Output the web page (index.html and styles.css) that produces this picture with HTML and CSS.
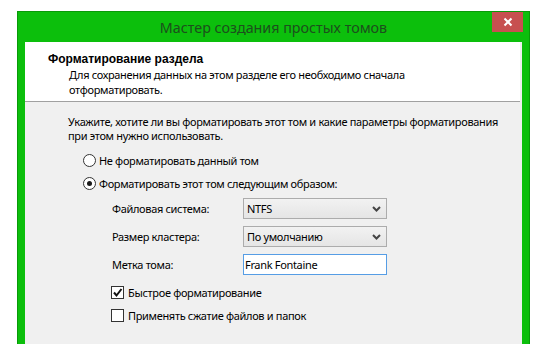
FILE: index.html
```html
<!DOCTYPE html>
<html lang="ru">
<head>
<meta charset="utf-8">
<title>Мастер создания простых томов</title>
<link rel="stylesheet" href="styles.css">
</head>
<body>
<div class="window">
  <div class="titlebar">
    <span class="title">Мастер создания простых томов</span>
    <div class="close">
      <svg width="10" height="10" viewBox="0 0 10 10"><path d="M1.5 1.5 L8.5 8.5 M8.5 1.5 L1.5 8.5" stroke="#fff" stroke-width="2" fill="none"/></svg>
    </div>
  </div>
  <div class="client">
    <div class="header">
      <div class="h-title">Форматирование раздела</div>
      <div class="h-sub">Для сохранения данных на этом разделе его необходимо сначала<br>отформатировать.</div>
    </div>
    <div class="content">
      <p class="intro">Укажите, хотите ли вы форматировать этот том и какие параметры форматирования<br>при этом нужно использовать.</p>
      <div class="option"><span class="radio"></span><span>Не форматировать данный том</span></div>
      <div class="option"><span class="radio checked"></span><span>Форматировать этот том следующим образом:</span></div>
      <div class="form">
        <span class="label">Файловая система:</span>
        <div class="combo"><span>NTFS</span><svg class="chev" width="9" height="6" viewBox="0 0 9 6"><path d="M1 1 L4.5 4.5 L8 1" stroke="#444" stroke-width="2" fill="none"/></svg></div>
        <span class="label">Размер кластера:</span>
        <div class="combo"><span>По умолчанию</span><svg class="chev" width="9" height="6" viewBox="0 0 9 6"><path d="M1 1 L4.5 4.5 L8 1" stroke="#444" stroke-width="2" fill="none"/></svg></div>
        <span class="label">Метка тома:</span>
        <div class="textbox">Frank Fontaine</div>
      </div>
      <div class="checks">
        <div class="check-row"><span class="box"><svg width="11" height="11" viewBox="0 0 11 11"><path d="M2 5.5 L4.5 8.5 L9.5 2" stroke="#111" stroke-width="2" fill="none"/></svg></span><span>Быстрое форматирование</span></div>
        <div class="check-row"><span class="box"></span><span>Применять сжатие файлов и папок</span></div>
      </div>
    </div>
  </div>
</div>
</body>
</html>
```
FILE: styles.css
```css
html, body {
  margin: 0;
  padding: 0;
  background: #ffffff;
  height: 100%;
  overflow: hidden;
}
body {
  font-family: "Noto Sans", "Open Sans", sans-serif;
  font-size: 11px;
  letter-spacing: -0.33px;
  color: #000;
}
.window {
  position: relative;
  margin: 11px 0 0 17px;
  width: 513px;
  height: 340px;
  box-sizing: border-box;
  border: 1px solid #089a08;
  border-bottom: none;
  background: #0cbf0c;
  display: flex;
  flex-direction: column;
}
.titlebar {
  height: 30px;
  display: flex;
  align-items: center;
  justify-content: center;
  flex: none;
}
.title {
  font-size: 14.3px;
  letter-spacing: 0;
  color: #1d4e1d;
}
.close {
  position: absolute;
  top: 0;
  right: 6px;
  width: 31px;
  height: 20px;
  background: #c75050;
  display: flex;
  align-items: center;
  justify-content: center;
}
.client {
  margin: 0 7px;
  flex: 1;
  background: #f0f0f0;
  display: flex;
  flex-direction: column;
}
.header {
  height: 59px;
  background: #fff;
  border-bottom: 1px solid #a0a0a0;
  box-sizing: content-box;
  padding-left: 23px;
  margin-right: 2px;
  flex: none;
}
.h-title {
  font-family: "Liberation Sans", Arial, sans-serif;
  font-size: 12px;
  letter-spacing: 0;
  font-weight: bold;
  margin-top: 10px;
  line-height: 15px;
}
.h-sub {
  margin-left: 21px;
  line-height: 15px;
}
.content {
  padding-left: 43px;
}
.intro {
  margin: 13px 0 0 0;
  line-height: 14px;
}
.option {
  display: flex;
  align-items: center;
  height: 23px;
  margin-left: 15px;
}
.option:first-of-type {
  margin-top: 6px;
}
.radio {
  width: 13px;
  height: 13px;
  box-sizing: border-box;
  border: 1px solid #333;
  border-radius: 50%;
  background: #fff;
  margin-right: 3px;
  display: flex;
  align-items: center;
  justify-content: center;
}
.radio.checked::after {
  content: "";
  width: 5px;
  height: 5px;
  border-radius: 50%;
  background: #1a1a1a;
}
.form {
  margin: 3px 0 0 44px;
  display: grid;
  grid-template-columns: 131px 144px;
  row-gap: 7px;
  align-items: center;
}
.label {
  line-height: 21px;
}
.combo {
  height: 21px;
  box-sizing: border-box;
  border: 1px solid #acacac;
  background: linear-gradient(#f2f2f2, #e5e5e5);
  display: flex;
  align-items: center;
  justify-content: space-between;
  padding: 0 5px 0 3px;
}
.textbox {
  height: 21px;
  box-sizing: border-box;
  border: 1px solid #569de5;
  background: #fff;
  padding: 0 2px 0 1px;
  line-height: 19px;
}
.checks {
  margin: 6px 0 0 43px;
}
.check-row {
  display: flex;
  align-items: center;
  height: 23px;
}
.box {
  width: 13px;
  height: 13px;
  box-sizing: border-box;
  border: 1px solid #333;
  background: #fff;
  margin-right: 4px;
  display: flex;
  align-items: center;
  justify-content: center;
}
```
